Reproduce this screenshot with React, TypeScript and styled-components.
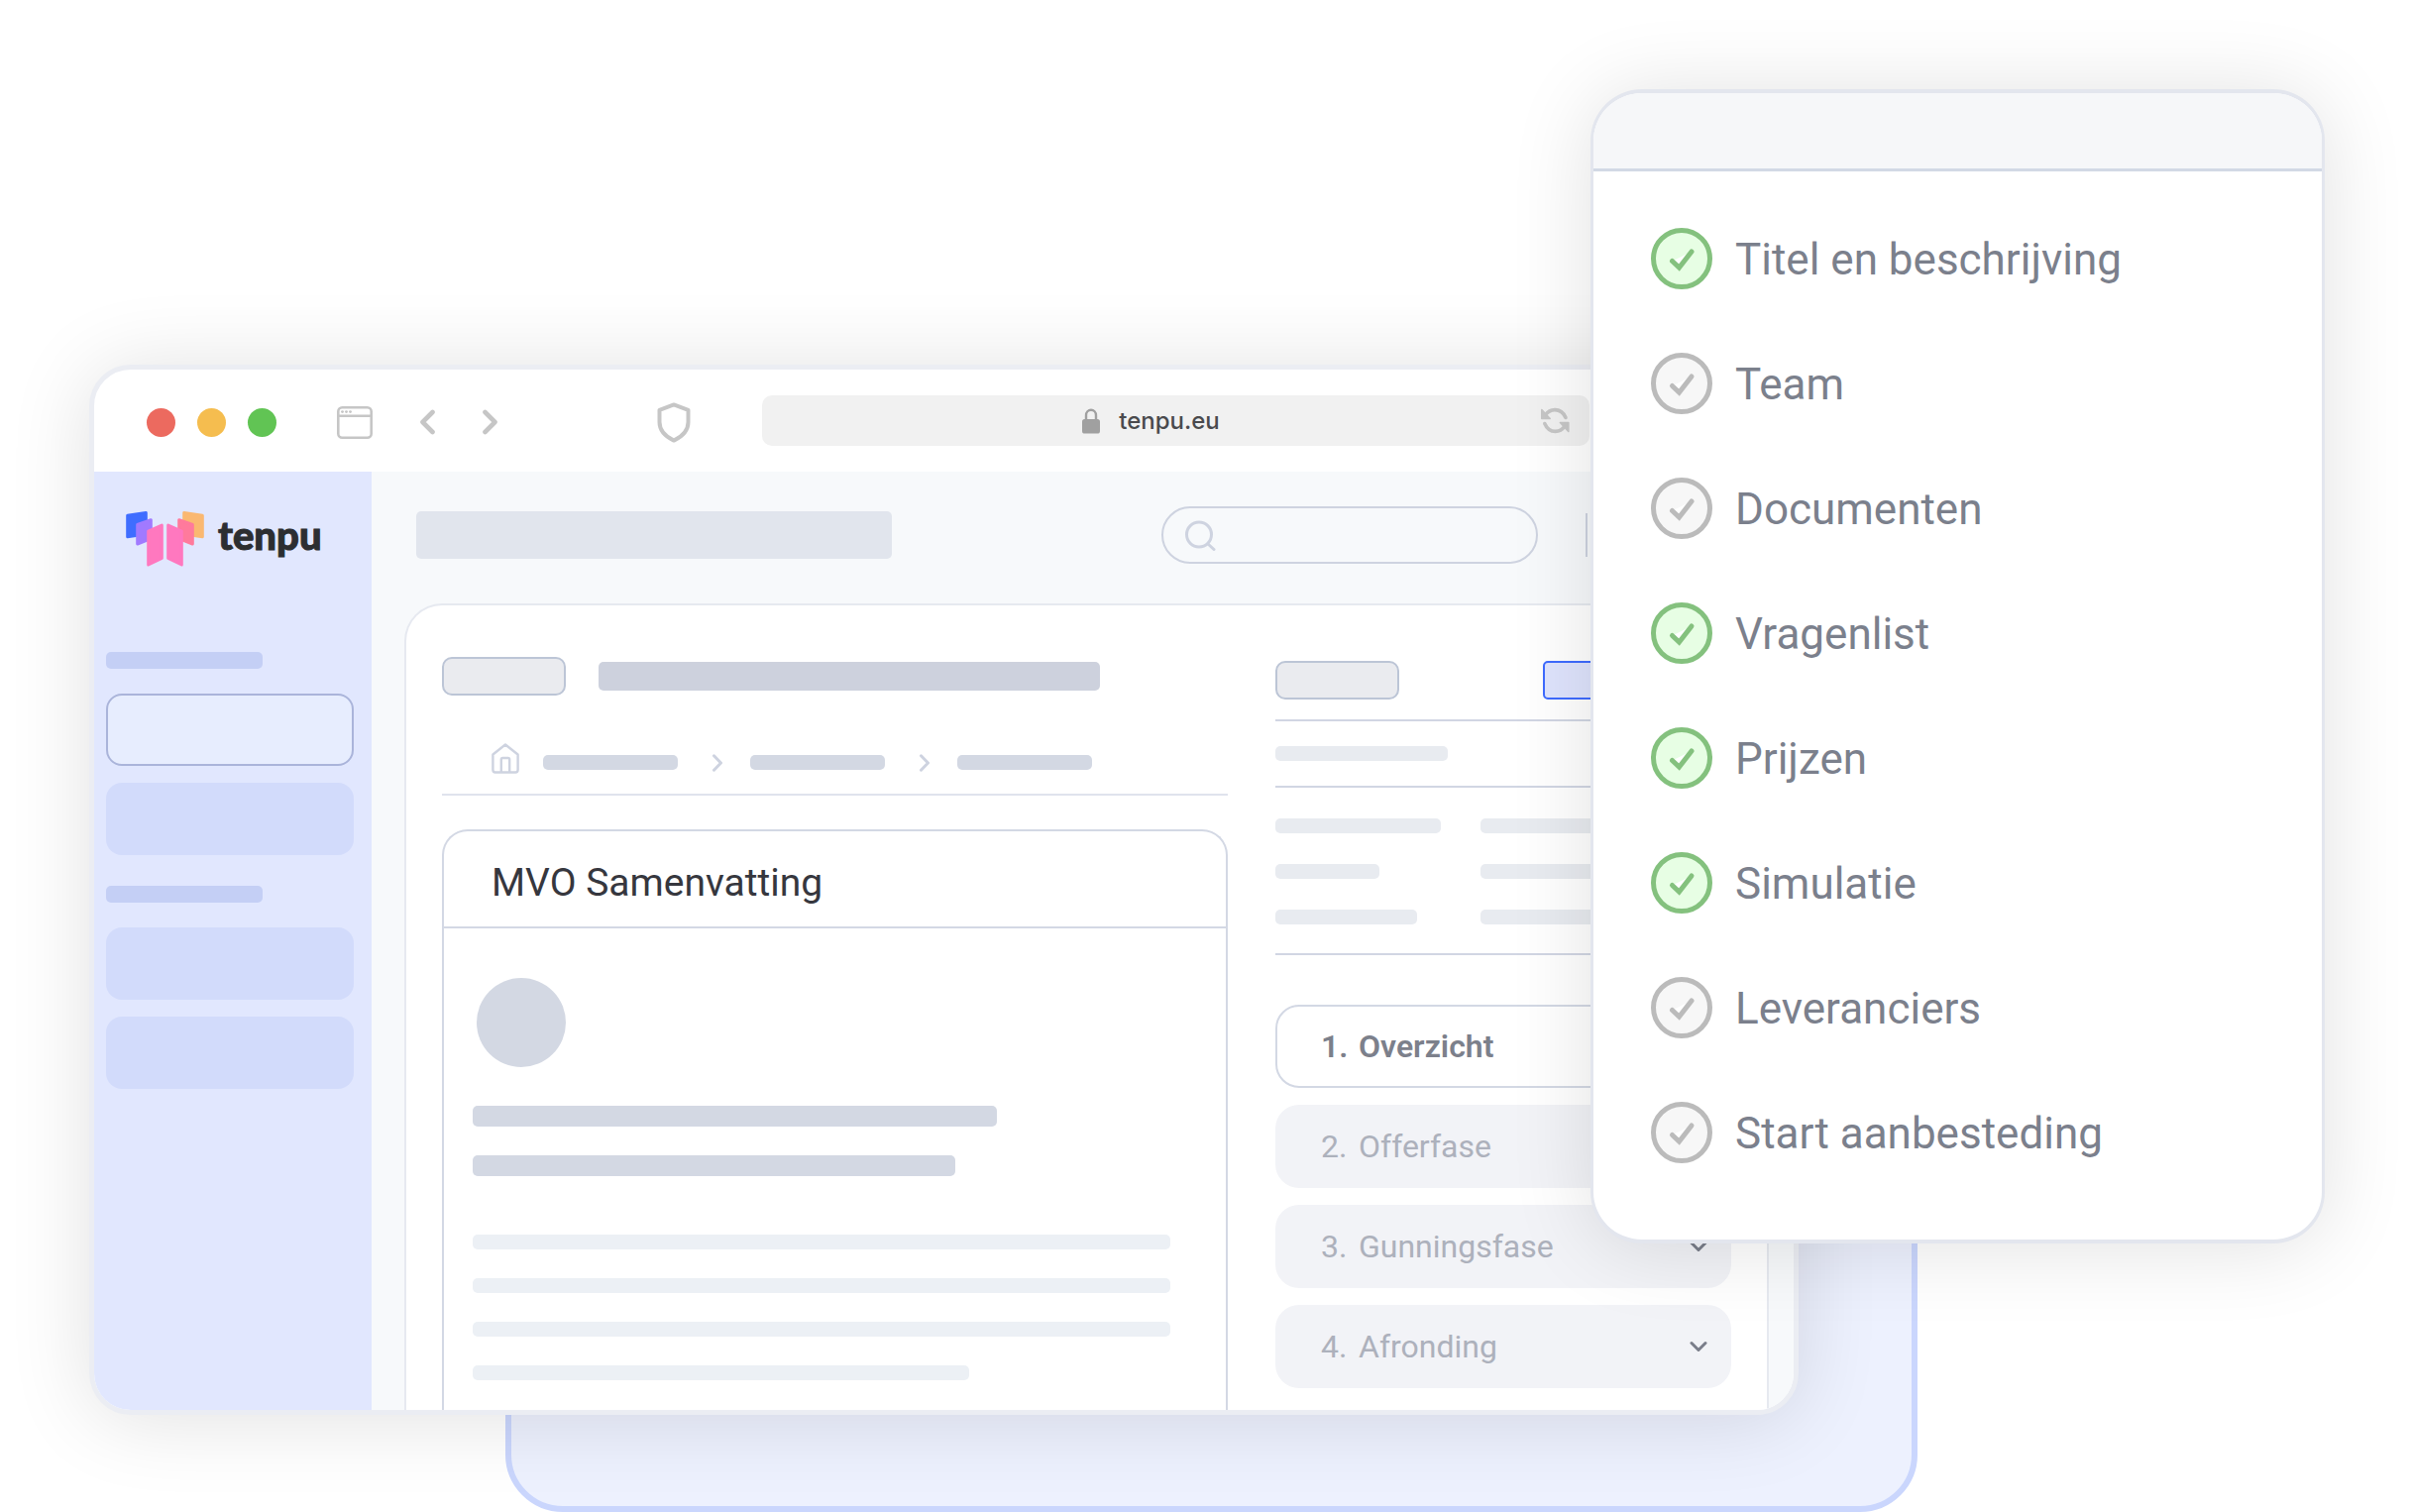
import React from "react";
import styled, { createGlobalStyle, css } from "styled-components";

const GlobalStyle = createGlobalStyle`
  *, *::before, *::after { box-sizing: border-box; }
  body { margin: 0; background: #fff; }
  button, input { font: inherit; color: inherit; }
  ul, ol, h1, h2 { margin: 0; padding: 0; list-style: none; }
  svg { display: block; flex: none; }
`;

const uiFont = `Roboto, "Liberation Sans", sans-serif`;

const Stage = styled.main`
  display: grid;
  grid-template-columns: minmax(0, 1fr);
  font-family: ${uiFont};
  overflow: hidden;

  & > * {
    grid-area: 1 / 1;
  }
`;

const Backdrop = styled.div`
  margin: 600px 497px 0 510px;
  border: 6px solid #cad6fd;
  border-radius: 58px;
  background: #edf1fe;
`;

/* Browser window */

const Browser = styled.section`
  margin: 368px 617px 98px 90px;
  border: 5px solid #ebedf3;
  border-radius: 42px;
  background: #fff;
  box-shadow: 0 4px 84px rgba(0, 0, 0, 0.12);
  overflow: hidden;
`;

const Toolbar = styled.header`
  display: flex;
  align-items: center;
  height: 103px;
  padding: 3px 206px 0 53px;
`;

const Lights = styled.div`
  display: flex;
  gap: 22px;
  margin-right: 61px;
`;

const Light = styled.span<{ $color: string }>`
  width: 29px;
  height: 29px;
  border-radius: 50%;
  background: ${(p) => p.$color};
`;

const IconButton = styled.button`
  display: block;
  padding: 0;
  border: 0;
  background: none;
  color: #c6c6c6;
  cursor: pointer;
`;

const ToolGroup = styled.div`
  display: flex;
  align-items: center;
  gap: 48px;
  margin-right: 161px;
`;

const AddressBar = styled.div`
  display: flex;
  flex: 1;
  align-items: center;
  height: 51px;
  margin: 0 0 3px 72px;
  padding-right: 20px;
  border-radius: 10px;
  background: #f1f1f1;
`;

const Address = styled.button`
  display: flex;
  flex: 1;
  align-items: center;
  justify-content: center;
  gap: 19px;
  padding: 0;
  border: 0;
  background: none;
  color: #4a4a4d;
  font: 500 24px/30px Inter, sans-serif;
`;

const Body = styled.div`
  display: grid;
  grid-template-columns: 280px minmax(0, 1fr);
`;

/* Sidebar */

const Sidebar = styled.nav`
  padding: 40px 18px 0 12px;
  background: #e1e7fe;
`;

const Brand = styled.a`
  display: flex;
  gap: 14px;
  height: 142px;
  padding-left: 20px;
  color: #2c2e31;
  font: 900 40px/48px Lato, sans-serif;
  -webkit-text-stroke: 1px currentColor;
  text-decoration: none;
`;

const MenuGroup = styled.div`
  display: grid;
  gap: 17px;
  margin-bottom: 31px;
`;

const MenuItem = styled.button<{ $active?: boolean }>`
  width: 100%;
  height: 73px;
  border: ${(p) => (p.$active ? "2px solid #aab4da" : "0")};
  border-radius: 16px;
  background: ${(p) => (p.$active ? "#e7edfe" : "#d2dbfb")};
`;

/* Placeholder bars */

const tones = {
  menu: "#c4cff5",
  title: "#e1e5ed",
  strong: "#cdd1dd",
  medium: "#d3d8e3",
  soft: "#e8ebf0",
  faint: "#ecf0f5",
};

const Bar = styled.span<{ $w: number; $h?: number; $tone: keyof typeof tones }>`
  display: block;
  width: ${(p) => p.$w}px;
  max-width: 100%;
  height: ${(p) => p.$h ?? 15}px;
  border-radius: 5px;
  background: ${(p) => tones[p.$tone]};
`;

const MenuLabel = styled(Bar)`
  margin-bottom: 8px;
`;

/* Workspace */

const Workspace = styled.div`
  display: flex;
  flex-direction: column;
  background: #f7f9fb;
`;

const TopBar = styled.div`
  display: flex;
  align-items: center;
  gap: 48px;
  padding: 35px 208px 40px 45px;
`;

const Search = styled.label`
  display: flex;
  align-items: center;
  gap: 12px;
  width: 380px;
  height: 58px;
  margin-left: auto;
  padding: 0 22px;
  border: 2px solid #ced3e0;
  border-radius: 29px;
  color: #ced3e0;
`;

const SearchInput = styled.input`
  flex: 1;
  min-width: 0;
  border: 0;
  outline: 0;
  background: none;
  color: #7c808b;
  font-size: 24px;
`;

const Divider = styled.span`
  width: 2px;
  height: 44px;
  background: #ced3e0;
`;

const Panel = styled.div`
  display: grid;
  flex: 1;
  grid-template-columns: minmax(0, 1fr) 460px;
  gap: 48px;
  margin: 0 25px 0 33px;
  padding: 52px 36px 0;
  border: 2px solid #e6e9f0;
  border-bottom: 0;
  border-radius: 38px 38px 0 0;
  background: #fff;
`;

const Column = styled.div`
  display: flex;
  flex-direction: column;
`;

const SideColumn = styled(Column)`
  padding: 4px 0 22px;
`;

const Heading = styled.div`
  display: flex;
  align-items: center;
  gap: 33px;
`;

const Chip = styled.span<{ $primary?: boolean }>`
  flex: none;
  width: 125px;
  height: 39px;
  border: 2px solid #bcc5d6;
  border-radius: 10px;
  background: #eaebef;
  ${(p) =>
    p.$primary &&
    css`
      width: 190px;
      border-color: #3e6bff;
      border-radius: 5px;
      background: #dfe4fd;
    `}
`;

const Crumbs = styled.nav`
  display: flex;
  align-items: center;
  gap: 24px;
  margin-top: 48px;
  padding: 0 0 12px 50px;
  border-bottom: 2px solid #e0e3ed;
  color: #ced3e0;
`;

const CrumbTrail = styled.div`
  display: flex;
  align-items: center;
  gap: 28px;
`;

const Summary = styled.article`
  flex: 1;
  margin-top: 34px;
  border: 2px solid #d3d8e4;
  border-bottom: 0;
  border-radius: 26px 26px 0 0;
`;

const SummaryTitle = styled.h1`
  padding: 24px 48px 16px;
  border-bottom: 2px solid #d3d8e4;
  color: #36373e;
  font-size: 39px;
  font-weight: 400;
  line-height: 56px;
`;

const SummaryBody = styled.div`
  display: grid;
  gap: 29px;
  padding: 50px 29px 30px;
`;

const Avatar = styled.span`
  width: 90px;
  height: 90px;
  margin: 0 0 10px 4px;
  border-radius: 50%;
  background: ${tones.medium};
`;

const Paragraph = styled.div`
  display: grid;
  gap: 29px;
  padding-top: 30px;
`;

const Section = styled.div<{ $top: number; $bottom: number }>`
  padding: ${(p) => p.$top}px 0 ${(p) => p.$bottom}px;
  border-bottom: 2px solid #d1d6e3;
`;

const ChipRow = styled.div`
  display: flex;
  justify-content: space-between;
`;

const Facts = styled.div`
  display: grid;
  grid-template-columns: 207px minmax(0, 1fr);
  row-gap: 31px;
`;

const Phases = styled.ol`
  display: grid;
  gap: 17px;
  margin-top: 50px;
`;

const Phase = styled.button<{ $active?: boolean }>`
  display: flex;
  align-items: center;
  width: 100%;
  height: 84px;
  padding: 0 24px 0 46px;
  border: 0;
  border-radius: 24px;
  background: #f2f3f7;
  color: #adb1bc;
  font-size: 32px;
  font-weight: 400;
  text-align: left;
  cursor: pointer;
  ${(p) =>
    p.$active &&
    css`
      padding: 0 22px 0 44px;
      border: 2px solid #d3d8e4;
      background: #fff;
      color: #7c808b;
      font-weight: 600;
    `}
`;

const PhaseNumber = styled.span`
  width: 38px;
`;

const PhaseName = styled.span`
  flex: 1;
`;

/* Checklist card */

const Checklist = styled.aside`
  justify-self: end;
  align-self: start;
  width: 741px;
  margin: 90px 86px 0 0;
  border: 4px solid #e3e6ee;
  border-width: 4px 3px;
  border-radius: 52px;
  background: #fff;
  box-shadow: 0 4px 84px rgba(0, 0, 0, 0.12);
  overflow: hidden;
`;

const ChecklistHeader = styled.div`
  height: 79px;
  border-bottom: 3px solid #d2d9e5;
  background: #f6f7f9;
`;

const Steps = styled.ul`
  display: grid;
  gap: 64px;
  padding: 57px 56px 77px 58px;
`;

const Step = styled.label`
  display: flex;
  align-items: center;
  gap: 23px;
  height: 62px;
  color: #7b808c;
  font-size: 44px;
  font-weight: 400;
  line-height: 62px;
  cursor: pointer;
`;

const StepName = styled.span`
  padding-top: 2px;
`;

const Tick = styled.span`
  display: grid;
  flex: none;

  & > * {
    grid-area: 1 / 1;
  }

  svg {
    fill: #f7f7f7;
    stroke: #bbbbbb;
  }

  input:checked + svg {
    fill: #e7fee4;
    stroke: #84c17e;
  }
`;

const TickInput = styled.input`
  width: 62px;
  height: 62px;
  margin: 0;
  opacity: 0;
`;

const WindowIcon = () => (
  <svg width="36" height="33" viewBox="0 0 36 33" fill="none" stroke="currentColor" strokeWidth="2.6">
    <rect x="1.3" y="1.3" width="33.4" height="30.4" rx="4" />
    <path d="M1.3 9.8h33.4" />
    <g fill="currentColor" stroke="none">
      <circle cx="5.500" cy="5.600" r="1.400" />
      <circle cx="9.500" cy="5.600" r="1.400" />
      <circle cx="13.500" cy="5.600" r="1.400" />
    </g>
  </svg>
);

const NavChevron = ({ forward }: { forward?: boolean }) => (
  <svg width="15" height="26" viewBox="0 0 15 26" fill="none" stroke="currentColor" strokeWidth="4.6" strokeLinecap="round" strokeLinejoin="round">
    <path d={forward ? "M2.5 3l10 10-10 10" : "M12.5 3l-10 10 10 10"} />
  </svg>
);

const ShieldIcon = () => (
  <svg width="34" height="41" viewBox="0 0 34 41" fill="none" stroke="currentColor" strokeWidth="4" strokeLinejoin="round">
    <path d="M17 2.400L31.500 7.800V20c0 8.500-5.800 14.500-14.500 18.600C8.300 34.500 2.500 28.500 2.500 20V7.800z" />
  </svg>
);

const LockIcon = () => (
  <svg width="18" height="26" viewBox="0 0 18 26">
    <rect y="11" width="18" height="14.500" rx="2.600" fill="#a0a0a0" />
    <path d="M4 12V7.200a5 5.400 0 0 1 10 0V12" fill="none" stroke="#a0a0a0" strokeWidth="2.400" />
  </svg>
);

const ReloadIcon = () => (
  <svg width="30" height="27" viewBox="0 0 30 27" fill="none" stroke="currentColor" strokeWidth="3.600" strokeLinecap="round" strokeLinejoin="round">
    <path d="M26 10.500C23.800 5.400 19.700 2.600 15 2.600c-3.900 0-7.200 1.900-9.600 5.400" />
    <path d="M4.800 16.500C7 21.600 10.800 24.400 15.500 24.400c3.900 0 7.200-1.900 9.600-5.400" />
    <path d="M1.800 2.500v9h8.400z M28.800 24.500v-9h-8.400z" fill="currentColor" strokeWidth="1.600" />
  </svg>
);

const LogoMark = () => (
  <svg width="79" height="56" viewBox="0 0 79 56" strokeWidth="3" strokeLinejoin="round">
    <path d="M1.700 4.300L20.300 1.600V23L1.700 25.700z" fill="#3f6dff" stroke="#3f6dff" />
    <path d="M77.300 4.300L58.700 1.600V23l18.600 2.700z" fill="#fab871" stroke="#fab871" />
    <path d="M11.700 13.500L25.300 8.700V27.500L11.700 33z" fill="#a17aff" stroke="#a17aff" />
    <path d="M67.300 13.500L53.700 8.700V27.500L67.300 33z" fill="#ff7a9c" stroke="#ff7a9c" />
    <path d="M22.700 20L36.300 14V47.500L22.700 54z" fill="#ff78bf" stroke="#ff78bf" />
    <path d="M56.300 20L42.700 14V47.500L56.300 54z" fill="#ff78bf" stroke="#ff78bf" />
  </svg>
);

const SearchIcon = () => (
  <svg width="32" height="32" viewBox="0 0 32 32" fill="none" stroke="currentColor" strokeWidth="3" strokeLinecap="round">
    <circle cx="14" cy="15.500" r="12.500" />
    <path d="M23 25l6 5.500" />
  </svg>
);

const HomeIcon = () => (
  <svg width="28" height="39" viewBox="0 0 28 39" fill="none" stroke="currentColor" strokeWidth="2.400" strokeLinejoin="round">
    <path d="M1.400 11.500L14 1.500l12.600 10V27a2.500 2.500 0 0 1-2.500 2.500H3.900A2.500 2.500 0 0 1 1.400 27z" />
    <path d="M9.800 29.500V16.500a1.500 1.500 0 0 1 1.500-1.500h5.400a1.500 1.500 0 0 1 1.500 1.500v13" />
  </svg>
);

const CrumbChevron = () => (
  <svg width="17" height="18" viewBox="0 0 17 18" fill="none" stroke="currentColor" strokeWidth="3" strokeLinecap="round" strokeLinejoin="round">
    <path d="M8.500 1.800L15.500 9l-7 7.200" />
  </svg>
);

const DownChevron = () => (
  <svg width="18" height="12" viewBox="0 0 18 12" fill="none" stroke="#7a7e8a" strokeWidth="3" strokeLinecap="round" strokeLinejoin="round">
    <path d="M2 2.500l7 7 7-7" />
  </svg>
);

const TickIcon = () => (
  <svg width="62" height="62" viewBox="0 0 62 62" strokeWidth="5" strokeLinecap="round">
    <circle cx="31" cy="31" r="28.500" />
    <path d="M21.500 33.500l7 6.500L41 24" fill="#fff" />
  </svg>
);

const phases = ["Overzicht", "Offerfase", "Gunningsfase", "Afronding"];

const facts = [
  [167, 167],
  [105, 140],
  [143, 160],
];

const steps = [
  { label: "Titel en beschrijving", done: true },
  { label: "Team", done: false },
  { label: "Documenten", done: false },
  { label: "Vragenlist", done: true },
  { label: "Prijzen", done: true },
  { label: "Simulatie", done: true },
  { label: "Leveranciers", done: false },
  { label: "Start aanbesteding", done: false },
];

export default function App() {
  return (
    <>
      <GlobalStyle />
      <Stage>
        <Backdrop />
        <Browser>
          <Toolbar>
            <Lights>
              <Light $color="#ec6a5f" />
              <Light $color="#f5bd4f" />
              <Light $color="#61c454" />
            </Lights>
            <ToolGroup>
              <IconButton type="button"><WindowIcon /></IconButton>
              <IconButton type="button"><NavChevron /></IconButton>
              <IconButton type="button"><NavChevron forward /></IconButton>
            </ToolGroup>
            <IconButton type="button"><ShieldIcon /></IconButton>
            <AddressBar>
              <Address type="button">
                <LockIcon />
                tenpu.eu
              </Address>
              <IconButton type="button"><ReloadIcon /></IconButton>
            </AddressBar>
          </Toolbar>
          <Body>
            <Sidebar>
              <Brand href="#">
                <LogoMark />
                tenpu
              </Brand>
              <MenuGroup>
                <MenuLabel $w={158} $h={17} $tone="menu" />
                <MenuItem type="button" $active />
                <MenuItem type="button" />
              </MenuGroup>
              <MenuGroup>
                <MenuLabel $w={158} $h={17} $tone="menu" />
                <MenuItem type="button" />
                <MenuItem type="button" />
              </MenuGroup>
            </Sidebar>
            <Workspace>
              <TopBar>
                <Bar $w={480} $h={48} $tone="title" />
                <Search>
                  <SearchIcon />
                  <SearchInput type="search" />
                </Search>
                <Divider />
              </TopBar>
              <Panel>
                <Column>
                  <Heading>
                    <Chip />
                    <Bar $w={506} $h={29} $tone="strong" />
                  </Heading>
                  <Crumbs>
                    <HomeIcon />
                    <CrumbTrail>
                      <Bar $w={136} $tone="medium" />
                      <CrumbChevron />
                      <Bar $w={136} $tone="medium" />
                      <CrumbChevron />
                      <Bar $w={136} $tone="medium" />
                    </CrumbTrail>
                  </Crumbs>
                  <Summary>
                    <SummaryTitle>MVO Samenvatting</SummaryTitle>
                    <SummaryBody>
                      <Avatar />
                      <Bar $w={529} $h={21} $tone="medium" />
                      <Bar $w={487} $h={21} $tone="medium" />
                      <Paragraph>
                        <Bar $w={704} $tone="faint" />
                        <Bar $w={704} $tone="faint" />
                        <Bar $w={704} $tone="faint" />
                        <Bar $w={501} $tone="faint" />
                      </Paragraph>
                    </SummaryBody>
                  </Summary>
                </Column>
                <SideColumn>
                  <Section $top={0} $bottom={20}>
                    <ChipRow>
                      <Chip />
                      <Chip $primary />
                    </ChipRow>
                  </Section>
                  <Section $top={25} $bottom={25}>
                    <Bar $w={174} $tone="soft" />
                  </Section>
                  <Section $top={31} $bottom={29}>
                    <Facts>
                      {facts.map(([name, value]) => (
                        <React.Fragment key={name}>
                          <Bar $w={name} $tone="soft" />
                          <Bar $w={value} $tone="soft" />
                        </React.Fragment>
                      ))}
                    </Facts>
                  </Section>
                  <Phases>
                    {phases.map((name, i) => (
                      <li key={name}>
                        <Phase type="button" $active={i === 0}>
                          <PhaseNumber>{i + 1}.</PhaseNumber>
                          <PhaseName>{name}</PhaseName>
                          <DownChevron />
                        </Phase>
                      </li>
                    ))}
                  </Phases>
                </SideColumn>
              </Panel>
            </Workspace>
          </Body>
        </Browser>
        <Checklist>
          <ChecklistHeader />
          <Steps>
            {steps.map((step) => (
              <li key={step.label}>
                <Step>
                  <Tick>
                    <TickInput type="checkbox" defaultChecked={step.done} />
                    <TickIcon />
                  </Tick>
                  <StepName>{step.label}</StepName>
                </Step>
              </li>
            ))}
          </Steps>
        </Checklist>
      </Stage>
    </>
  );
}
